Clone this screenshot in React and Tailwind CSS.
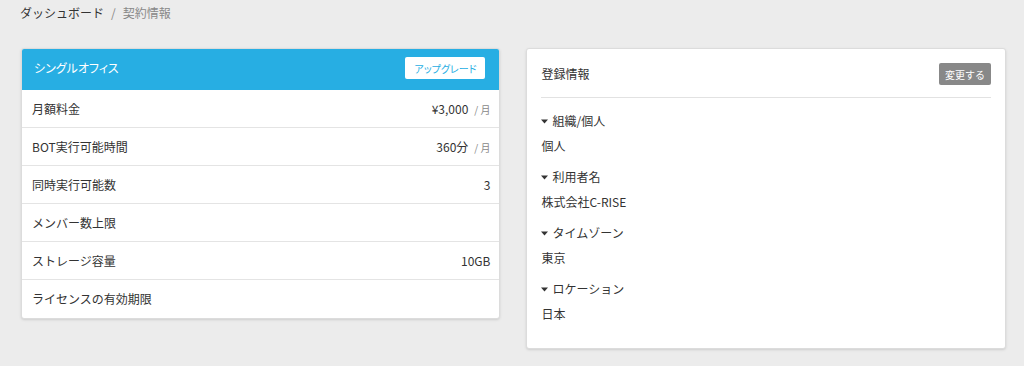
import React from 'react'

const font = { fontFamily: '"Noto Sans CJK JP", "Noto Sans", sans-serif' }

const plan = [
  { label: '月額料金', value: '¥3,000', unit: '/ 月' },
  { label: 'BOT実行可能時間', value: '360分', unit: '/ 月' },
  { label: '同時実行可能数', value: '3' },
  { label: 'メンバー数上限', value: '' },
  { label: 'ストレージ容量', value: '10GB' },
  { label: 'ライセンスの有効期限', value: '' },
]

const info = [
  { label: '組織/個人', value: '個人' },
  { label: '利用者名', value: '株式会社C-RISE' },
  { label: 'タイムゾーン', value: '東京' },
  { label: 'ロケーション', value: '日本' },
]

function Caret() {
  return (
    <svg width="7" height="5" viewBox="0 0 7 5" className="mr-[4px] mt-[1px]">
      <path d="M0 0.5h7L3.5 4.5z" fill="#333" />
    </svg>
  )
}

export default function App() {
  return (
    <div className="min-h-[366px] bg-[#ececec] text-[#333] text-[12px]" style={font}>
      {/* breadcrumb */}
      <div className="flex items-center h-[26px] pl-[20px]">
        <span className="text-[#333]">ダッシュボード</span>
        <span className="mx-[7px] text-[#888]">/</span>
        <span className="text-[#888]">契約情報</span>
      </div>

      <div className="flex gap-[26px] pl-[21px] pr-[18px] mt-[22px] items-start">
        {/* plan card */}
        <div className="w-[480px] bg-white border border-[#dcdcdc] rounded-[3px] shadow-sm overflow-hidden">
          <div className="h-[41px] bg-[#27aee3] flex items-center justify-between pl-[12px] pr-[14px] pb-[3px]">
            <span className="text-white text-[12px] [font-feature-settings:'palt']">シングルオフィス</span>
            <button className="h-[22px] w-[80px] bg-white text-[#27aee3] text-[10px] rounded-[2px] [font-feature-settings:'palt']">アップグレード</button>
          </div>
          {plan.map((r, i) => (
            <div key={r.label} className={`h-[38px] flex items-center justify-between pl-[10px] pr-[9px] ${i < plan.length - 1 ? 'border-b border-[#e4e4e4]' : ''}`}>
              <span>{r.label}</span>
              <span className="flex items-baseline">
                <span>{r.value}</span>
                {r.unit && <span className="ml-[6px] text-[10px] text-[#888]">{r.unit}</span>}
              </span>
            </div>
          ))}
        </div>

        {/* registration card */}
        <div className="w-[480px] bg-white border border-[#dcdcdc] rounded-[3px] shadow-sm px-[14px] pt-[14px] pb-[24px]">
          <div className="flex items-center justify-between h-[22px]">
            <span>登録情報</span>
            <button className="h-[22px] px-[6px] bg-[#888] text-white text-[10px] rounded-[2px]">変更する</button>
          </div>
          <div className="mt-[12px] border-t border-[#e2e2e2]" />
          <div className="pt-[13px]">
            {info.map((r, i) => (
              <div key={r.label} className={i > 0 ? 'mt-[11px]' : ''}>
                <div className="flex items-center h-[20px]">
                  <Caret />
                  <span>{r.label}</span>
                </div>
                <div className="h-[20px] mt-[5px] flex items-center">{r.value}</div>
              </div>
            ))}
          </div>
        </div>
      </div>
    </div>
  )
}
